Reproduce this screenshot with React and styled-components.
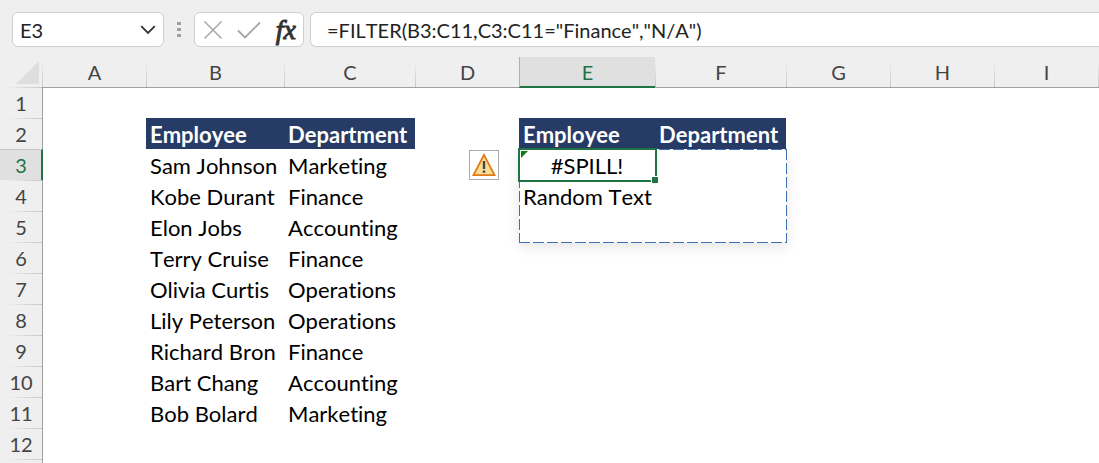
import React from 'react';
import styled, { createGlobalStyle, css } from 'styled-components'

const columns = [
    { name: 'A', width: 104 },
    { name: 'B', width: 138 },
    { name: 'C', width: 131 },
    { name: 'D', width: 104 },
    { name: 'E', width: 136 },
    { name: 'F', width: 131 },
    { name: 'G', width: 104 },
    { name: 'H', width: 104 },
    { name: 'I', width: 104 },
]

const employees = [
    ['Sam Johnson', 'Marketing'],
    ['Kobe Durant', 'Finance'],
    ['Elon Jobs', 'Accounting'],
    ['Terry Cruise', 'Finance'],
    ['Olivia Curtis', 'Operations'],
    ['Lily Peterson', 'Operations'],
    ['Richard Bron', 'Finance'],
    ['Bart Chang', 'Accounting'],
    ['Bob Bolard', 'Marketing'],
]

const rows = Array.from({ length: 12 }, (_, i) => i + 1)

const cells = {
    B2: 'Employee',
    C2: 'Department',
    E2: 'Employee',
    F2: 'Department',
    E4: 'Random Text',
}

employees.forEach(([name, department], i) => {
    cells[`B${i + 3}`] = name
    cells[`C${i + 3}`] = department
})

const FormulaBar = () => {
    return(
        <Bar>
            <NameBox>
                <NameInput aria-label="Name box" defaultValue="E3" />
                <NameButton type="button" aria-label="Show names">
                    <svg width="16" height="10" viewBox="0 0 16 10" fill="none" stroke="#333" strokeWidth="1.8">
                        <path d="M1.2 1.2 8 8l6.8-6.8" />
                    </svg>
                </NameButton>
            </NameBox>
            <Grip><i /><i /><i /></Grip>
            <Actions>
                <IconButton type="button" aria-label="Cancel">
                    <svg width="20" height="20" viewBox="0 0 20 20" fill="none" stroke="#a6a6a6" strokeWidth="1.5">
                        <path d="M1.5 1.5l17 17M18.5 1.5l-17 17" />
                    </svg>
                </IconButton>
                <IconButton type="button" aria-label="Enter">
                    <svg width="24" height="18" viewBox="0 0 24 18" fill="none" stroke="#a6a6a6" strokeWidth="1.8">
                        <path d="M1 9.5l7 7L23 1.5" />
                    </svg>
                </IconButton>
                <FxButton type="button" aria-label="Insert function">fx</FxButton>
            </Actions>
            <FormulaInput aria-label="Formula" defaultValue={'=FILTER(B3:C11,C3:C11="Finance","N/A")'} />
        </Bar>
    )
}

const SpillCell = () => {
    return(
        <ActiveCell>
            <SpillRange />
            <Selection />
            <ErrorFlag />
            <FillHandle />
            #SPILL!
        </ActiveCell>
    )
}

const WarningCell = () => {
    return(
        <AnchorCell>
            <WarningButton type="button" aria-label="Error options">
                <svg width="24" height="24" viewBox="0 0 24 24">
                    <path d="M12 1.8 22.5 22.2h-21z" fill="#fbdc95" stroke="#e07b1a" strokeWidth="1.8" />
                    <path d="M10.8 8h2.4v8h-2.4zM10.8 17.5h2.4v2.2h-2.4z" fill="#444" />
                </svg>
            </WarningButton>
        </AnchorCell>
    )
}

const App = () => {
    return(
        <Page>
            <GlobalStyle />
            <FormulaBar />
            <Sheet>
                <colgroup>
                    <Col $width={42} />
                    {columns.map(c => <Col key={c.name} $width={c.width} />)}
                    <col />
                </colgroup>
                <thead>
                    <tr>
                        <Corner>
                            <svg width="23" height="23" viewBox="0 0 23 23"><path d="M23 0v23H0z" fill="#dedede" /></svg>
                        </Corner>
                        {columns.map(c => (
                            <ColumnHead key={c.name} scope="col" $active={c.name === 'E'}>{c.name}</ColumnHead>
                        ))}
                        <ColumnHead as="td" />
                    </tr>
                </thead>
                <tbody>
                    {rows.map(row => (
                        <tr key={row}>
                            <RowHead scope="row" $active={row === 3}>{row}</RowHead>
                            {columns.map(({ name }) => {
                                const id = name + row
                                if (id === 'E3') return <SpillCell key={id} />
                                if (id === 'D3') return <WarningCell key={id} />
                                return (
                                    <Cell
                                        key={id}
                                        $title={row === 2 && !!cells[id]}
                                        $first={row === 1}
                                        $edge={name === 'A'}
                                        $active={id === 'E1' || id === 'A3'}
                                    >
                                        {cells[id]}
                                    </Cell>
                                )
                            })}
                            <Cell $first={row === 1} />
                        </tr>
                    ))}
                    <tr>
                        <RowHead as="td" />
                        <Cell $edge />
                    </tr>
                </tbody>
            </Sheet>
        </Page>
    )
}

export default App

const GlobalStyle = createGlobalStyle `
    *{
        box-sizing: border-box;
    }
    body{
        margin: 0;
        background: white;
    }
    body, button, input{
        font-family: Lato, "Liberation Sans", sans-serif;
        font-size: 20px;
        font-kerning: none;
        font-variant-ligatures: none;
    }
    button, input{
        padding: 0;
        border: 0;
        outline: none;
        background: none;
    }
`

const Page = styled.main `
    height: 100vh;
    overflow: hidden;
`

const Bar = styled.div `
    display: flex;
    padding: 12px 0 10px 12px;
    height: 57px;
    background: #efefef;
`

const box = css `
    border: 1px solid #cfcfcf;
    border-radius: 6px;
    background: white;
`

const NameBox = styled.div `
    ${box}
    display: flex;
    align-items: center;
    width: 152px;
    padding: 0 7px;
`

const NameInput = styled.input `
    flex: 1;
    min-width: 0;
    color: #222;
`

const NameButton = styled.button `
    display: flex;
`

const Grip = styled.div `
    display: flex;
    flex-direction: column;
    justify-content: center;
    align-items: center;
    gap: 3px;
    width: 30px;
    i{
        width: 4px;
        height: 3px;
        background: #a0a0a0;
    }
`

const Actions = styled.div `
    ${box}
    display: flex;
    align-items: center;
    justify-content: space-between;
    width: 110px;
    padding: 0 7px 0 8px;
    margin-right: 6px;
`

const IconButton = styled.button `
    display: flex;
`

const FxButton = styled.button `
    font-family: "Liberation Serif", serif;
    font-style: italic;
    font-size: 28px;
    line-height: 28px;
    color: #333;
    -webkit-text-stroke: 1px #333;
`

const FormulaInput = styled.input `
    && {
        ${box}
        flex: 1;
        min-width: 0;
        padding: 0 16px;
        border-right: 0;
        border-radius: 6px 0 0 6px;
        color: #222;
    }
`

const Sheet = styled.table `
    width: 100%;
    table-layout: fixed;
    border-collapse: separate;
    border-spacing: 0;
    background: white;
    th, td{
        height: 31px;
        padding: 0;
        line-height: 26px;
        white-space: nowrap;
    }
`

const Col = styled.col `
    width: ${ props => props.$width }px;
`

const Corner = styled.td `
    && {
        height: 30px;
    }
    background: #efefef;
    svg{
        display: block;
        margin-left: 16px;
    }
`

const ColumnHead = styled.th `
    && {
        height: 30px;
    }
    border-left: 1px solid;
    border-image: linear-gradient(#efefef 20%, #c4c4c4) 1;
    background: #efefef;
    color: #444;
    font-weight: 400;
    ${ props => props.$active && css `
        border-image: linear-gradient(#b0b0b0, #b0b0b0) 1;
        background: #e0e0e0;
        color: #217346;
        box-shadow: inset 0 -1px #217346;
    `}
`

const RowHead = styled.th `
    border-top: 1px solid;
    border-image: linear-gradient(90deg, #efefef 20%, #c4c4c4) 1;
    background: #efefef;
    color: #444;
    font-weight: 400;
    ${ props => props.$active && css `
        border-image: linear-gradient(#c4c4c4, #c4c4c4) 1;
        background: #e0e0e0;
        color: #217346;
        box-shadow: inset -1px 0 #217346;
    `}
`

const Cell = styled.td `
    && {
        padding: 2px 0 0 4px;
    }
    border: 0 solid ${ props => props.$active ? '#217346' : '#a0a0a0' };
    font-size: 22px;
    color: black;
    ${ props => props.$first && css `
        border-top-width: 1px;
    `}
    ${ props => props.$edge && css `
        border-left-width: 1px;
    `}
    ${ props => props.$title && css `
        background: #263b66;
        color: white;
        font-weight: 700;
    `}
`

const AnchorCell = styled.td `
    position: relative;
`

const WarningButton = styled.button `
    position: absolute;
    top: 1px;
    right: 20px;
    display: flex;
    align-items: center;
    justify-content: center;
    width: 30px;
    height: 30px;
    border: 1px solid #ababab;
    background: white;
`

const ActiveCell = styled.td `
    && {
        padding-top: 2px;
    }
    position: relative;
    font-size: 22px;
    text-align: center;
`

const dash = '#3f6fb0 0 11px, white 11px 14px'

//covers the 2 x 3 cells that the formula would fill
const SpillRange = styled.div `
    position: absolute;
    top: 0;
    left: 0;
    width: 268px;
    height: 94px;
    pointer-events: none;
    box-shadow: 0 4px 12px rgba(0, 0, 0, 0.1);
    background:
        repeating-linear-gradient(90deg, ${dash}) top / 100% 1px no-repeat,
        repeating-linear-gradient(90deg, ${dash}) bottom / 100% 1px no-repeat,
        repeating-linear-gradient(${dash}) left / 1px 100% no-repeat,
        repeating-linear-gradient(${dash}) right / 1px 100% no-repeat;
`

const Selection = styled.div `
    position: absolute;
    inset: -1px -2px -2px -1px;
    border: 2px solid #217346;
`

const ErrorFlag = styled.div `
    position: absolute;
    top: 2px;
    left: 2px;
    width: 7px;
    height: 7px;
    background: #107c10;
    clip-path: polygon(0 0, 100% 0, 0 100%);
`

const FillHandle = styled.div `
    position: absolute;
    right: -3px;
    bottom: -3px;
    width: 7px;
    height: 7px;
    border: solid white;
    border-width: 1px 0 0 1px;
    background: #217346;
`
